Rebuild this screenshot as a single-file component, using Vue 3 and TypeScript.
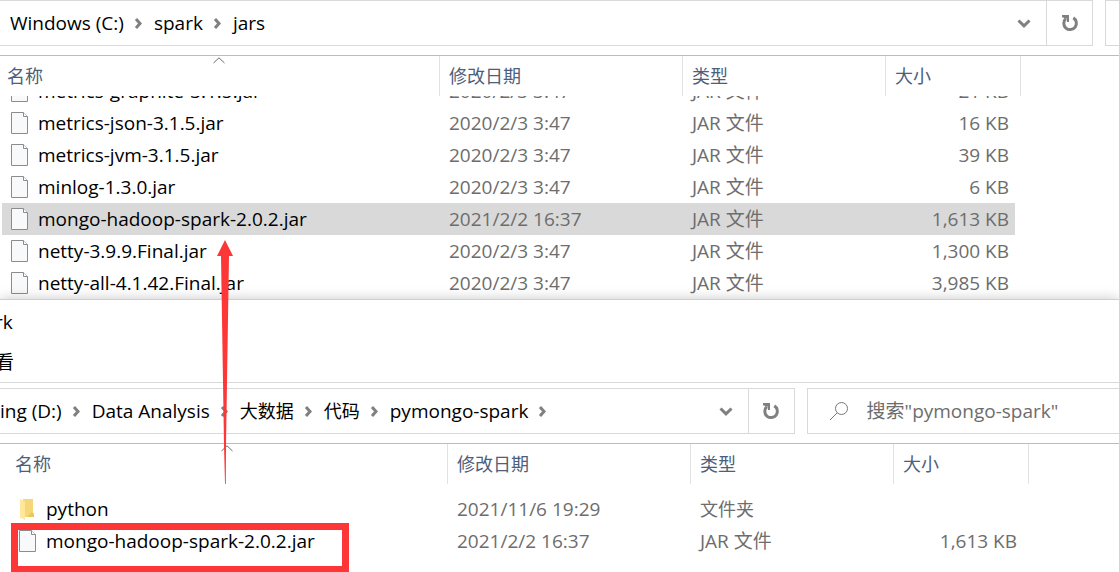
<script setup lang="ts">
interface Entry {
  name: string
  date: string
  type: string
  size: string
  folder?: boolean
  selected?: boolean
}

interface ExplorerPane {
  id: string
  front: boolean
  crumbs: string[]
  trailing: boolean
  search: string
  entries: Entry[]
}

const columns: string[] = ['名称', '修改日期', '类型', '大小']

const isHan = (text: string): boolean => /[\u4e00-\u9fff]/.test(text)

const jar = (name: string, size: string, date = '2020/2/3 3:47', selected = false): Entry => ({
  name, date, type: 'JAR 文件', size, selected,
})

const panes: ExplorerPane[] = [
  {
    id: 'jars',
    front: false,
    crumbs: ['Windows (C:)', 'spark', 'jars'],
    trailing: false,
    search: '',
    entries: [
      jar('metrics-graphite-3.1.5.jar', '21 KB'),
      jar('metrics-json-3.1.5.jar', '16 KB'),
      jar('metrics-jvm-3.1.5.jar', '39 KB'),
      jar('minlog-1.3.0.jar', '6 KB'),
      jar('mongo-hadoop-spark-2.0.2.jar', '1,613 KB', '2021/2/2 16:37', true),
      jar('netty-3.9.9.Final.jar', '1,300 KB'),
      jar('netty-all-4.1.42.Final.jar', '3,985 KB'),
    ],
  },
  {
    id: 'project',
    front: true,
    crumbs: ['ing (D:)', 'Data Analysis', '大数据', '代码', 'pymongo-spark'],
    trailing: true,
    search: '搜索"pymongo-spark"',
    entries: [
      { name: 'python', date: '2021/11/6 19:29', type: '文件夹', size: '', folder: true },
      jar('mongo-hadoop-spark-2.0.2.jar', '1,613 KB', '2021/2/2 16:37'),
    ],
  },
]
</script>

<template>
  <main class="desktop">
    <section v-for="pane in panes" :key="pane.id" class="pane" :class="pane.front ? 'front' : 'back'">
      <header v-if="pane.front" class="caption">
        <div class="title">rk</div>
        <button type="button" class="tab">看</button>
      </header>

      <div class="bar">
        <div class="address">
          <nav class="crumbs">
            <template v-for="(crumb, i) in pane.crumbs" :key="crumb">
              <button type="button" class="crumb" :class="{ han: isHan(crumb) }">{{ crumb }}</button>
              <svg v-if="i < pane.crumbs.length - 1 || pane.trailing" class="sep" viewBox="0 0 30 14" aria-hidden="true">
                <path d="M12 3 L16 7.500 L12 12" />
              </svg>
            </template>
          </nav>
          <button type="button" class="drop" aria-label="Recent locations">
            <svg viewBox="0 0 16 12" aria-hidden="true"><path d="M2.500 3.500 L8 8.800 L13.500 3.500" /></svg>
          </button>
          <button type="button" class="refresh" aria-label="Refresh">
            <svg viewBox="0 0 18 18" aria-hidden="true">
              <path class="ring" d="M12.300 3.900 A6.300 6.300 0 1 1 4.800 4.700" />
              <path class="tip" d="M1 1 H8 V8 H5.900 V4.800 L1 3.200 Z" />
            </svg>
          </button>
        </div>
        <label class="search">
          <svg v-if="pane.search" viewBox="0 0 20 20" aria-hidden="true">
            <circle cx="12.500" cy="7.500" r="6" />
            <path d="M8.200 11.800 L1 19" />
          </svg>
          <input type="search" :placeholder="pane.search" aria-label="Search" />
        </label>
      </div>

      <div class="list">
        <table>
          <thead>
            <tr>
              <th v-for="(column, i) in columns" :key="column" scope="col">
                <svg v-if="i === 0" class="sort" viewBox="0 0 12 7" aria-hidden="true"><path d="M0.500 6 L6 0.800 L11.500 6" /></svg>
                <button type="button">{{ column }}</button>
              </th>
            </tr>
          </thead>
          <tbody>
            <tr v-for="entry in pane.entries" :key="entry.name" :class="{ selected: entry.selected }">
              <td class="name">
                <svg v-if="entry.folder" class="icon" viewBox="0 0 18 22" aria-hidden="true">
                  <path fill="#f6d778" d="M4 1 H14 V15 L15 16 V19 H4 Z" />
                  <path fill="#edc55c" d="M13 14 L15 16 V19 H8 Z" />
                  <path fill="#ffe79b" d="M1 1 L6 3.500 V22 L1 19.500 Z" />
                </svg>
                <svg v-else class="icon" viewBox="0 0 18 22" aria-hidden="true">
                  <path fill="#f8f9fa" stroke="#8c8c8c" d="M0.500 0.500 H12.500 L16.500 4.500 V21.500 H0.500 Z" />
                  <path fill="#ffffff" stroke="#8c8c8c" d="M12.500 0.500 V4.500 H16.500" />
                </svg>
                <span>{{ entry.name }}</span>
              </td>
              <td>{{ entry.date }}</td>
              <td :class="{ han: entry.folder }">{{ entry.type }}</td>
              <td class="size">{{ entry.size }}</td>
            </tr>
          </tbody>
        </table>
        <div v-if="pane.front" class="frame"></div>
      </div>
    </section>

    <svg class="arrow" viewBox="0 0 18 245" aria-hidden="true">
      <path d="M9 0 L17 16 H13 L10 205 L9.800 244 H9 L8 205 L5 16 H1 Z" />
    </svg>
  </main>
</template>

<style>
body {
  margin: 0;
  background: #ffffff;
}
</style>

<style scoped>
.desktop {
  position: relative;
  display: flex;
  flex-direction: column;
  overflow: hidden;
  min-height: 100vh;
  box-sizing: border-box;
  background: #ffffff;
  color: #000000;
  font-family: "Open Sans", "Noto Sans CJK SC", sans-serif;
  font-size: 19px;
  line-height: 24px;
}

button,
input {
  border: 0;
  margin: 0;
  padding: 0;
  background: none;
  color: inherit;
  font: inherit;
  white-space: nowrap;
}

svg {
  display: block;
  flex: none;
}

.han {
  font-size: 18px;
}

.front {
  position: relative;
  flex: 1;
  background: #ffffff;
  border-top: 1px solid #cfcfcf;
  box-shadow: 0 0 12px rgba(0, 0, 0, 0.22);
}

.caption {
  display: flex;
  flex-direction: column;
  align-items: flex-start;
  gap: 16px;
  padding: 10px 0 8px;
  margin-bottom: 5px;
  border-bottom: 1px solid #d9d9d9;
}

.title,
.tab {
  margin-left: -5px;
}

.bar {
  display: flex;
  gap: 12px;
  padding-bottom: 9px;
  border-bottom: 1px solid #bcbcbc;
}

.address,
.search {
  display: flex;
  align-items: center;
  box-sizing: border-box;
  height: 46px;
  border: 1px solid #d9d9d9;
}

.address {
  flex: 795 1 0;
  min-width: 0;
  border-left: 0;
}

.back .address {
  flex-grow: 1;
}

.crumbs {
  display: flex;
  align-items: center;
  flex: 1;
  min-width: 0;
  overflow: hidden;
}

.back .crumbs {
  padding-left: 10px;
}

.sep {
  width: 30px;
  height: 14px;
}

.sep path,
.drop path {
  fill: none;
  stroke: #808080;
  stroke-width: 3;
}

.drop {
  display: grid;
  place-items: center;
  width: 44px;
  height: 44px;
}

.drop svg {
  width: 16px;
  height: 12px;
}

.refresh {
  display: grid;
  place-items: center;
  width: 46px;
  height: 44px;
  border-left: 1px solid #d9d9d9;
}

.refresh svg {
  width: 18px;
  height: 18px;
}

.ring {
  fill: none;
  stroke: #808080;
  stroke-width: 3;
}

.tip {
  fill: #808080;
}

.search {
  flex: 312 1 0;
  min-width: 0;
  gap: 18px;
  border-right: 0;
  color: #6d6d6d;
}

.back .search {
  flex: 0 0 14px;
}

.search svg {
  width: 20px;
  height: 20px;
  margin-left: 21px;
  fill: none;
  stroke: #777777;
}

.search input {
  flex: 1;
  width: 100%;
  min-width: 0;
  outline: 0;
  appearance: none;
}

.search input::placeholder {
  color: #6d6d6d;
  opacity: 1;
}

.list {
  position: relative;
}

.front .list {
  margin-left: 8px;
}

table,
thead,
tbody {
  display: block;
}

tr {
  display: grid;
  grid-template-columns: 440fr 243fr 203fr 135fr 98fr;
}

.front tr {
  grid-template-columns: 440fr 243fr 203fr 135fr 90fr;
}

thead {
  position: relative;
  z-index: 1;
  background: #ffffff;
  color: #4c607a;
  font-size: 18px;
}

th {
  position: relative;
  box-sizing: border-box;
  height: 40px;
  padding: 8px 0 8px 9px;
  border-right: 1px solid #e2e2e2;
  font-weight: 400;
  text-align: left;
}

th:first-child {
  padding-left: 7px;
}

th button {
  display: block;
}

.sort {
  position: absolute;
  top: 1px;
  left: calc(50% - 7px);
  width: 12px;
  height: 7px;
  fill: none;
  stroke: #6d6d6d;
}

.back tbody {
  margin-top: -21px;
}

.front tbody {
  padding-top: 9px;
}

td {
  height: 32px;
  padding: 0 0 0 9px;
  line-height: 32px;
  color: #6d6d6d;
  white-space: nowrap;
}

td.name {
  display: flex;
  align-items: center;
  gap: 9px;
  padding-left: 11px;
  color: #000000;
}

td.size {
  padding: 0 12px 0 0;
  text-align: right;
}

.icon {
  width: 18px;
  height: 22px;
}

.selected {
  background: linear-gradient(#d9d9d9, #d9d9d9) 2px 0 / calc(100% - 106px) 100% no-repeat;
}

.frame {
  position: absolute;
  z-index: 2;
  left: 3px;
  top: 79px;
  box-sizing: border-box;
  width: 338px;
  height: 49px;
  border: 7px solid #fd3737;
  border-bottom-width: 6px;
}

.arrow {
  position: absolute;
  z-index: 3;
  left: 216px;
  top: 240px;
  width: 18px;
  height: 245px;
  fill: #fd3737;
}
</style>
